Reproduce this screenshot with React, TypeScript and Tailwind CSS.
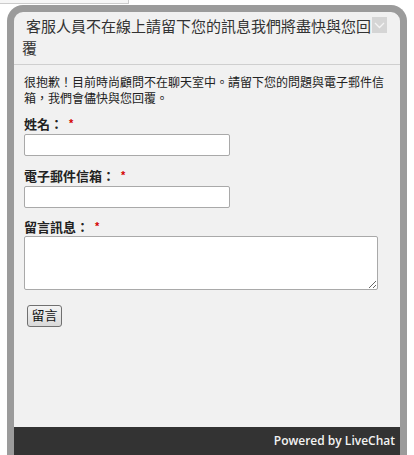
import React from "react";

const cjk = "font-['Liberation_Sans','Noto_Sans_CJK_TC',sans-serif]";

function Label({ text }: { text: string }) {
  return (
    <div className="flex items-start h-[16px] leading-[16px] text-[13px] font-bold text-[#222]">
      <span>{text}</span>
      <span className="ml-[6px] text-[11px] leading-[12px] text-[#d40000]">*</span>
    </div>
  );
}

export default function App() {
  return (
    <div className={`w-[414px] h-[455px] bg-white overflow-hidden ${cjk}`}>
      {/* fragment of the host page */}
      <div className="w-[129px] h-[4px] bg-[#f6f6f6] border-r border-b border-[#cccccc]" />

      {/* chat window frame */}
      <div className="mt-[1px] ml-[7px] w-[400px] h-[450px] flex flex-col bg-[#f1f1f1] border-[7px] border-b-0 border-[#9b9b9b] rounded-t-[16px]">
        {/* header */}
        <div className="pl-[8px] pr-[13px] pt-[4px] pb-[4px] border-b border-[#cfcfcf]">
          <div className="float-right mt-[1px] w-[15px] h-[16px] bg-[#d5d5d5] flex items-center justify-center">
            <svg width="11" height="7" viewBox="0 0 11 7">
              <polyline points="1,1 5.5,5.5 10,1" fill="none" stroke="#f4f4f4" strokeWidth="1.3" />
            </svg>
          </div>
          <div className="text-[15px] leading-[22px] text-[#333] indent-[4px]">
            客服人員不在線上請留下您的訊息我們將盡快與您回覆
          </div>
        </div>

        {/* body */}
        <div className="flex-1 px-[10px] pt-[10px]">
          <p className="text-[12px] leading-[16px] text-[#222]">
            很抱歉！目前時尚顧問不在聊天室中。請留下您的問題與電子郵件信箱，我們會儘快與您回覆。
          </p>

          <div className="mt-[10px] flex flex-col">
            <Label text="姓名：" />
            <input className="mt-[1px] w-[206px] h-[22px] bg-white border border-[#a9a9a9] rounded-[2px]" />

            <div className="mt-[13px]">
              <Label text="電子郵件信箱：" />
            </div>
            <input className="mt-[1px] w-[206px] h-[22px] bg-white border border-[#a9a9a9] rounded-[2px]" />

            <div className="mt-[12px]">
              <Label text="留言訊息：" />
            </div>
            <textarea className="mt-0 w-[354px] h-[54px] bg-white border border-[#a9a9a9] rounded-[2px]" />

            <div className="mt-[13px] ml-[3px]">
              <button className="w-[35px] h-[22px] text-[13px] leading-[20px] text-[#111] border border-[#707070] rounded-[3px] bg-gradient-to-b from-[#f4f4f4] to-[#d9d9d9]">
                留言
              </button>
            </div>
          </div>
        </div>

        {/* footer */}
        <div className="h-[28px] bg-[#333333] flex items-center justify-end pr-[5px]">
          <span className="text-[12px] font-semibold text-[#f2f2f2] font-['Open_Sans',sans-serif]">Powered by LiveChat</span>
        </div>
      </div>
    </div>
  );
}
